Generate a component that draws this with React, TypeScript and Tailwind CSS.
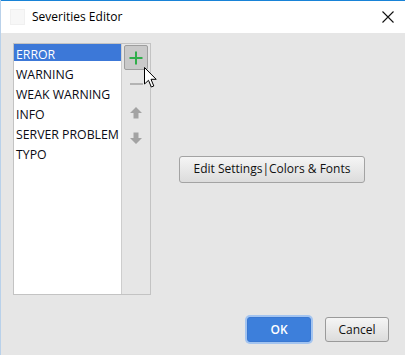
import React from "react";

const items = ["ERROR", "WARNING", "WEAK WARNING", "INFO", "SERVER PROBLEM", "TYPO"];

function Cursor() {
  return (
    <svg width="16" height="24" viewBox="0 0 16 24" className="absolute left-[142px] top-[66px]">
      <path
        d="M1.5 1.5 L1.5 18 L5.5 14.3 L8.3 21 L10.8 20 L8 13.3 L13.2 13.3 Z"
        fill="#fff"
        stroke="#000"
        strokeWidth="1"
        strokeLinejoin="miter"
      />
    </svg>
  );
}

export default function App() {
  return (
    <div className="relative w-[405px] h-[355px] bg-[#e6e6e6] border-l border-[#b9d1ea] flex flex-col font-['Open_Sans',sans-serif] text-[12px] text-[#111] overflow-hidden">
      {/* title bar */}
      <div className="h-[33px] bg-white border-t border-[#1883d7] flex items-center shrink-0">
        <div className="ml-[9px] w-[15px] h-[16px] bg-[#f7f7f7] border border-[#f0f0f0]" />
        <span className="ml-[7px] text-[12px] text-black leading-none">Severities Editor</span>
        <svg width="14" height="14" viewBox="0 0 14 14" className="ml-auto mr-[10px]">
          <path d="M1.5 1.5 L12.5 12.5 M12.5 1.5 L1.5 12.5" stroke="#111" strokeWidth="1.1" />
        </svg>
      </div>

      {/* body */}
      <div className="flex pl-[12px] pr-[12px] pt-[10px]">
        {/* list panel */}
        <div className="w-[138px] h-[252px] border border-[#c3c3c3] flex">
          <div className="w-[107px] bg-white flex flex-col">
            {items.map((it, i) => (
              <div
                key={it}
                className={
                  i === 0
                    ? "h-[20px] leading-[21px] pl-[2px] text-[12.3px] text-white bg-[linear-gradient(to_bottom,#3c78d8_17px,transparent_17px)] whitespace-nowrap"
                    : "h-[20px] leading-[21px] pl-[2px] text-[12.3px] text-[#0a0a14] whitespace-nowrap"
                }
              >
                {it}
              </div>
            ))}
          </div>
          <div className="flex-1 border-l border-[#cdcdcd] flex flex-col items-center">
            <div className="mt-[1px] w-[24px] h-[25px] rounded-[2px] bg-[#c9c9c9] border border-[#9e9e9e] flex items-center justify-center">
              <svg width="14" height="14" viewBox="0 0 14 14">
                <path d="M7 0.5 V13.5 M0.5 7 H13.5" stroke="#2fae4a" strokeWidth="2" />
              </svg>
            </div>
            <div className="h-[28px] w-[24px] flex items-center justify-center">
              <div className="w-[13px] h-[2px] bg-[#b3b3b3]" />
            </div>
            <div className="h-[2px]" />
            <div className="h-[25px] flex items-center justify-center">
              <svg width="12" height="12" viewBox="0 0 12 12">
                <path d="M6 0 L12 6 L8.5 6 L8.5 11.5 L3.5 11.5 L3.5 6 L0 6 Z" fill="#a3a3a3" />
              </svg>
            </div>
            <div className="h-[25px] flex items-center justify-center">
              <svg width="12" height="12" viewBox="0 0 12 12">
                <path d="M6 12 L12 6 L8.5 6 L8.5 0.5 L3.5 0.5 L3.5 6 L0 6 Z" fill="#a3a3a3" />
              </svg>
            </div>
          </div>
        </div>

        {/* right side */}
        <div className="flex-1 flex items-center justify-center">
          <button className="w-[186px] h-[27px] rounded-[3px] border border-[#a3a3a3] bg-[linear-gradient(to_bottom,#f5f5f5,#dcdcdc)] text-[12px] text-[#111] leading-none">
            Edit Settings|Colors &amp; Fonts
          </button>
        </div>
      </div>

      {/* bottom buttons */}
      <div className="flex justify-end items-center gap-[14px] pr-[16px] mt-[22px]">
        <button className="w-[64px] h-[25px] rounded-[3px] bg-[#3d7fdb] border border-[#3a78d2] ring-2 ring-[#a3c4f0] text-white font-semibold text-[12px] leading-none">
          OK
        </button>
        <button className="w-[64px] h-[25px] rounded-[3px] border border-[#9a9a9a] bg-[linear-gradient(to_bottom,#f5f5f5,#dcdcdc)] text-[12px] text-[#111] leading-none">
          Cancel
        </button>
      </div>

      <Cursor />
    </div>
  );
}
